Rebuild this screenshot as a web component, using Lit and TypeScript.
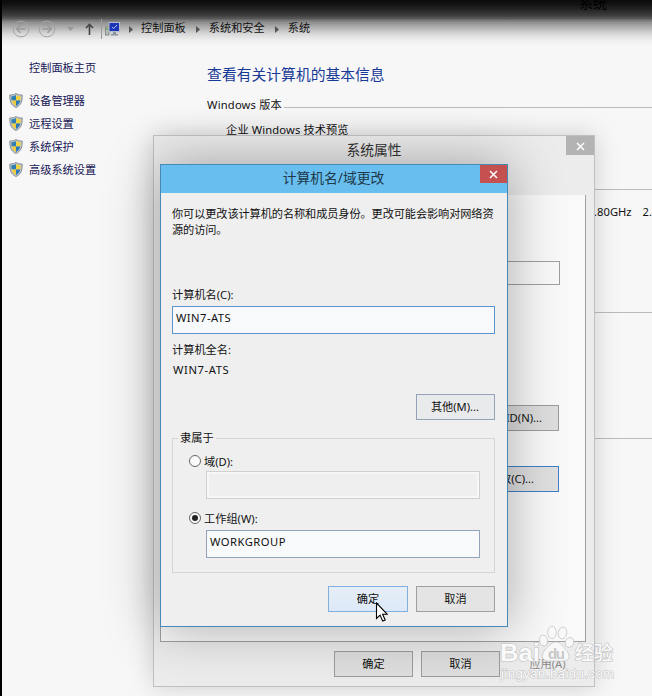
import { LitElement, html, svg, css } from "lit";
import { customElement, property } from "lit/decorators.js";

const shield = html`<svg width="14" height="15" viewBox="0 0 14 15">
  <path d="M7 .5C5.400 1.700 3.100 2 .8 2c0 6 .7 10 6.200 12.500C12.500 12 13.200 8 13.200 2 10.900 2 8.600 1.700 7 .5Z" fill="#c0c6ca" stroke="#7d8991" stroke-width=".9"/>
  <path d="M7 2C5.500 3 4 3.300 2.300 3.400c0 1.500.1 2.800.4 4H7Z" fill="#2f7fb5"/>
  <path d="M7 2c1.500 1 3 1.300 4.700 1.400 0 1.500-.1 2.800-.4 4H7Z" fill="#f2d443"/>
  <path d="M2.700 7.400H7V13C4.600 11.800 3.300 10 2.700 7.400Z" fill="#edcb3c"/>
  <path d="M11.300 7.400H7V13c2.400-1.200 3.700-3 4.300-5.600Z" fill="#2c78b8"/>
</svg>`;

const cross = html`<svg width="9" height="9" viewBox="0 0 9 9"><path d="M1 1l7 7M8 1L1 8" stroke="#fff" stroke-width="1.500" fill="none"/></svg>`;

const arrow = (flip: boolean) => html`<svg width="18" height="18" viewBox="0 0 18 18">
  <circle cx="9" cy="9" r="7.900" fill="none" stroke="#a4a4a4" stroke-width="1"/>
  ${flip
    ? svg`<path d="M4.500 9h9M9.500 5.200L13.300 9l-3.800 3.800" fill="none" stroke="#999" stroke-width="1.500"/>`
    : svg`<path d="M13.500 9h-9M8.500 5.200L4.700 9l3.800 3.800" fill="none" stroke="#999" stroke-width="1.500"/>`}
</svg>`;

const fonts = css`
  :host {
    font-family: "Noto Sans", "Noto Sans CJK SC", sans-serif;
    font-size: 11.2px;
    color: #111;
  }
  * { box-sizing: border-box; }
  svg { display: block; flex: none; }
`;

@customElement("dialog-button")
class DialogButton extends LitElement {
  @property() label = "";
  @property({ reflect: true }) kind = "";
  static styles = [fonts, css`
    :host {
      box-sizing: border-box;
      display: flex; align-items: center; justify-content: center;
      width: 79px; height: 26px; padding-bottom: 2px;
      border: 1px solid #a0a0a0; background: #e4e4e4;
      white-space: nowrap;
    }
    :host([kind="hot"]) { width: 80px; border-color: #7fb0e0; background: linear-gradient(#e6eef6, #dce9f8); }
    :host([kind="cool"]) { border-color: #95a3b8; background: #e9eaeb; padding-right: 1px; }
    :host([kind="under"]) { background: #dedede; border-color: #9c9c9c; }
    :host([kind="focus"]) { background: #e0e0e1; border-color: #3f7fc8; }
    :host(.id), :host(.change) { justify-content: flex-end; padding-right: 16px; }
    :host(.change) { padding-right: 24px; }
    :host([kind="flat"]) { border: 0; background: none; color: #888; }
  `];
  render() { return html`${this.label}`; }
}

@customElement("system-page")
class SystemPage extends LitElement {
  static styles = [fonts, css`
    :host { display: flex; flex-direction: column; height: 696px; background: #f7f7f7; border-left: 2px solid #000; }
    .top {
      height: 46px; flex: none;
      background: linear-gradient(#0c0c0c 0, #121212 4px, #262626 10px, #404040 16px, #646464 19px, #8c8c8c 22px, #b4b4b4 28px, #d8d8d8 34px, #eee 40px, #f7f7f7 46px);
    }
    .caption { height: 18px; padding-left: 577px; font-size: 14px; line-height: 20px; margin-top: -7px; color: #000; }
    .edge { height: 1px; margin-top: 7px; background: #555; }
    .nav { display: flex; align-items: center; height: 20px; padding-left: 10px; }
    .nav .fwd { margin-left: 8px; }
    .nav .drop { margin-left: 11px; }
    .nav .up { margin-left: 11px; }
    .path { display: flex; align-items: center; height: 20px; margin-left: 7px; padding-left: 3px; border-left: 1px solid #9a9a9a; }
    .path span { line-height: 16px; margin-top: -2px; }
    .path .sep { margin: 0 9px 0 10px; }
    .path .first { margin: 0 8px 0 9px; }
    .body { display: flex; flex: 1; }
    .side { width: 191px; padding: 11px 0 0 7px; color: #181858; }
    .home { height: 22px; line-height: 22px; padding-left: 20px; }
    .links { margin-top: 10px; }
    .link { display: flex; align-items: center; gap: 6px; height: 23px; }
    .link span { margin-top: -1px; }
    .main { flex: 1; padding: 16px 0 0 15px; }
    h1 { margin: 0; font-weight: 400; font-size: 14.8px; line-height: 25px; height: 26px; color: #173a96; }
    .section { display: flex; align-items: center; gap: 2px; height: 22px; margin-top: 6px; letter-spacing: .18px; }
    .section span { margin-top: -2px; }
    .section i { flex: 1; height: 1px; background: #bbb; margin-top: 4px; }
    .edition { padding-left: 19px; height: 22px; line-height: 22px; margin-top: 3px; letter-spacing: .12px; }
    .rule { height: 1px; background: #bbb; margin-left: 387px; }
    .r1 { margin-top: 48px; }
    .cpu { display: flex; gap: 11px; height: 122px; padding: 12px 0 0 387px; line-height: 20px; }
    .r2 { margin-bottom: 125px; }
  `];
  render() {
    const sep = (cls: string) => html`<svg class=${cls} width="4" height="7" viewBox="0 0 4 7"><path d="M0 0l4 3.500L0 7z" fill="#555"/></svg>`;
    return html`
      <div class="top">
        <div class="caption">系统</div>
        <div class="edge"></div>
        <div class="nav">
          ${arrow(false)}
          <span class="fwd">${arrow(true)}</span>
          <svg class="drop" width="7" height="4" viewBox="0 0 7 4"><path d="M0 0h7L3.500 4z" fill="#999"/></svg>
          <svg class="up" width="9" height="12" viewBox="0 0 9 12"><path d="M4.500 12V1.500M1 5l3.500-3.700L8 5" fill="none" stroke="#444" stroke-width="1.600"/></svg>
          <div class="path">
            <svg width="15" height="14" viewBox="0 0 15 14">
              <rect x=".4" y="5" width="3.600" height="8" fill="#b4bcb4" stroke="#707c70" stroke-width=".7"/>
              <path d="M1 7h2" stroke="#4a9a3a"/>
              <rect x="4" y=".5" width="10.500" height="9" fill="#1a35b8" stroke="#b4bac8"/>
              <path d="M7 5l1.500 1.600 3.500-3.600" fill="none" stroke="#b8c6f4" stroke-width="1"/>
              <path d="M8 10h3v2h2v1.500H6V12h2z" fill="#8a94a0"/>
            </svg>
            ${sep("first")}<span>控制面板</span>${sep("sep")}<span>系统和安全</span>${sep("sep")}<span>系统</span>
          </div>
        </div>
      </div>
      <div class="body">
        <div class="side">
          <div class="home">控制面板主页</div>
          <div class="links">
            ${["设备管理器", "远程设置", "系统保护", "高级系统设置"].map((t) => html`<div class="link">${shield}<span>${t}</span></div>`)}
          </div>
        </div>
        <div class="main">
          <h1>查看有关计算机的基本信息</h1>
          <div class="section"><span>Windows 版本</span><i></i></div>
          <div class="edition">企业 Windows 技术预览</div>
          <div class="rule r1"></div>
          <div class="cpu"><span>.80GHz</span><span>2.</span></div>
          <div class="rule r2"></div>
          <div class="rule"></div>
        </div>
      </div>`;
  }
}

@customElement("properties-dialog")
class PropertiesDialog extends LitElement {
  static styles = [fonts, css`
    :host {
      box-sizing: border-box;
      display: flex; flex-direction: column; width: 442px; height: 552px;
      background: #ececec; border: 1px solid #c0c0c0;
      box-shadow: 0 0 24px rgba(0,0,0,.17);
    }
    .bar { display: flex; height: 59px; flex: none; }
    .bar h2 { flex: 1; margin: 0; padding-left: 28px; text-align: center; font-weight: 400; font-size: 13.8px; line-height: 28px; color: #333; }
    .close { display: flex; align-items: center; justify-content: center; width: 28px; height: 19px; background: #b3b3b3; padding-top: 1px; }
    .panel {
      display: flex; flex-direction: column; align-items: flex-end; flex: none;
      width: 426px; height: 447px; margin-left: 6px; padding: 66px 26px 0 0;
      background: #f9f9f9; border: 1px solid #a0a0a0; border-top: 0;
    }
    .field { width: 300px; height: 24px; border: 1px solid #a0a0a0; margin-right: -1px; }
    .id { margin-top: 120px; }
    .change { margin-top: 35px; }
    .actions { display: flex; gap: 8px; padding: 9px 0 0 180px; }
  `];
  render() {
    return html`
      <div class="bar"><h2>系统属性</h2><div class="close">${cross}</div></div>
      <div class="panel">
        <div class="field"></div>
        <dialog-button class="id" kind="under" label="络 ID(N)..."></dialog-button>
        <dialog-button class="change" kind="focus" label="更改(C)..."></dialog-button>
      </div>
      <div class="actions">
        <dialog-button kind="under" label="确定"></dialog-button>
        <dialog-button kind="under" label="取消"></dialog-button>
        <dialog-button kind="flat" label="应用(A)"></dialog-button>
      </div>`;
  }
}

@customElement("rename-dialog")
class RenameDialog extends LitElement {
  static styles = [fonts, css`
    :host {
      box-sizing: border-box;
      display: flex; flex-direction: column; width: 348px; height: 463px;
      background: #efefef; border: 1px solid #4788b5;
      box-shadow: 0 0 50px 2px rgba(0,0,0,.31);
    }
    .bar { display: flex; height: 28px; flex: none; background: #68bfef; }
    .bar h2 { flex: 1; margin: 0; padding-left: 26px; text-align: center; font-weight: 400; font-size: 13.8px; line-height: 26px; color: #20394a; }
    .close { display: flex; align-items: center; justify-content: center; width: 27px; height: 18px; background: #c4504f; }
    .content { display: flex; flex-direction: column; padding: 13px 12px 0 11px; }
    p { margin: 0 -12px 0 0; line-height: 16px; height: 79px; letter-spacing: -.1px; }
    .label { height: 20px; line-height: 20px; }
    .name { margin-bottom: 1px; }
    .input { height: 28px; border: 1px solid #5b93cc; background: #f8f9fa; padding: 0 3px; line-height: 21px; letter-spacing: .45px; }
    .full { margin-top: 6px; }
    .value { height: 20px; line-height: 20px; padding-left: 1px; letter-spacing: .6px; }
    .more { align-self: flex-end; margin-top: 14px; }
    fieldset { margin: 9px 0 0; padding: 0 14px 0 15px; height: 144px; border: 1px solid #d4d4d4; min-width: 0; }
    legend { margin-left: -10px; padding: 0 2px; height: 18px; line-height: 18px; }
    .radio { display: flex; align-items: center; gap: 3px; height: 20px; }
    .radio i { width: 12px; height: 12px; border: 1px solid #666; border-radius: 50%; background: #fafafa; margin-left: 1px; display: grid; place-items: center; }
    .radio b { width: 6px; height: 6px; border-radius: 50%; background: #222; }
    .domain { margin-top: 4px; }
    .sub { margin-left: 18px; border-color: #93a3bb; letter-spacing: .5px; }
    .off { background: #efefef; border-color: #d0d0d0; box-shadow: inset 0 0 0 2px #f7f7f7; }
    .group { margin-top: 9px; }
    .wg { margin-top: 2px; }
    .actions { display: flex; justify-content: flex-end; gap: 8px; margin-top: 13px; }
  `];
  render() {
    return html`
      <div class="bar"><h2>计算机名/域更改</h2><div class="close">${cross}</div></div>
      <div class="content">
        <p>你可以更改该计算机的名称和成员身份。更改可能会影响对网络资<br>源的访问。</p>
        <div class="label name">计算机名(C):</div>
        <div class="input">WIN7-ATS</div>
        <div class="label full">计算机全名:</div>
        <div class="value">WIN7-ATS</div>
        <dialog-button class="more" kind="cool" label="其他(M)..."></dialog-button>
        <fieldset>
          <legend>隶属于</legend>
          <div class="radio domain"><i></i>域(D):</div>
          <div class="input sub off"></div>
          <div class="radio group"><i><b></b></i>工作组(W):</div>
          <div class="input sub wg">WORKGROUP</div>
        </fieldset>
        <div class="actions">
          <dialog-button kind="hot" label="确定"></dialog-button>
          <dialog-button label="取消"></dialog-button>
        </div>
      </div>`;
  }
}

@customElement("app-root")
class AppRoot extends LitElement {
  static styles = [fonts, css`
    :host { display: block; position: relative; width: 652px; height: 696px; overflow: hidden; }
    .outer { position: absolute; left: 153px; top: 135px; }
    .inner { position: absolute; left: 160px; top: 164px; }
    .cursor { position: absolute; left: 375px; top: 602px; }
    .mark { position: absolute; left: 498px; top: 622px; }
  `];
  render() {
    return html`
      <system-page></system-page>
      <properties-dialog class="outer"></properties-dialog>
      <rename-dialog class="inner"></rename-dialog>
      <svg class="mark" width="122" height="64" viewBox="0 0 122 64">
        <g fill="#f8f8f8" stroke="#c6c6c6" stroke-width=".8">
          <ellipse cx="45.500" cy="18.500" rx="4" ry="5.500" transform="rotate(-12 45.500 18.500)"/>
          <ellipse cx="54" cy="10.500" rx="4.300" ry="6.200"/>
          <ellipse cx="64.500" cy="11" rx="4.300" ry="6" transform="rotate(10 64.500 11)"/>
          <ellipse cx="71.500" cy="20.500" rx="4.200" ry="5" transform="rotate(20 71.500 20.500)"/>
          <path d="M58 20c5 0 7 5 10 8s6 11-3 11c-4 0-10 0-14 0-9 0-7-8-4-11s6-8 11-8Z"/>
        </g>
        <g fill="#fafafa" stroke="#c2c2c2" stroke-width="1.200" paint-order="stroke" font-family="Liberation Sans, Noto Sans CJK SC, sans-serif" font-weight="700">
          <text x="2" y="39" font-size="24" textLength="40" lengthAdjust="spacingAndGlyphs">Bai</text>
          <text x="77" y="38" font-size="19" textLength="38" font-weight="500" lengthAdjust="spacingAndGlyphs">经验</text>
          <text x="3" y="56" font-size="13" font-weight="400" stroke-width="1" textLength="113">jingyan.baidu.com</text>
        </g>
        <text x="50" y="37" font-size="15" textLength="17" font-family="Liberation Sans, sans-serif" font-weight="700" fill="#c8c8c8">du</text>
      </svg>
      <svg class="cursor" width="13" height="21" viewBox="0 0 13 21">
        <path d="M1.500 1v15.500l3.600-3.400 2.600 6 2.500-1.100-2.600-5.800h4.500Z" fill="#fff" stroke="#000" stroke-width="1.100"/>
      </svg>`;
  }
}
